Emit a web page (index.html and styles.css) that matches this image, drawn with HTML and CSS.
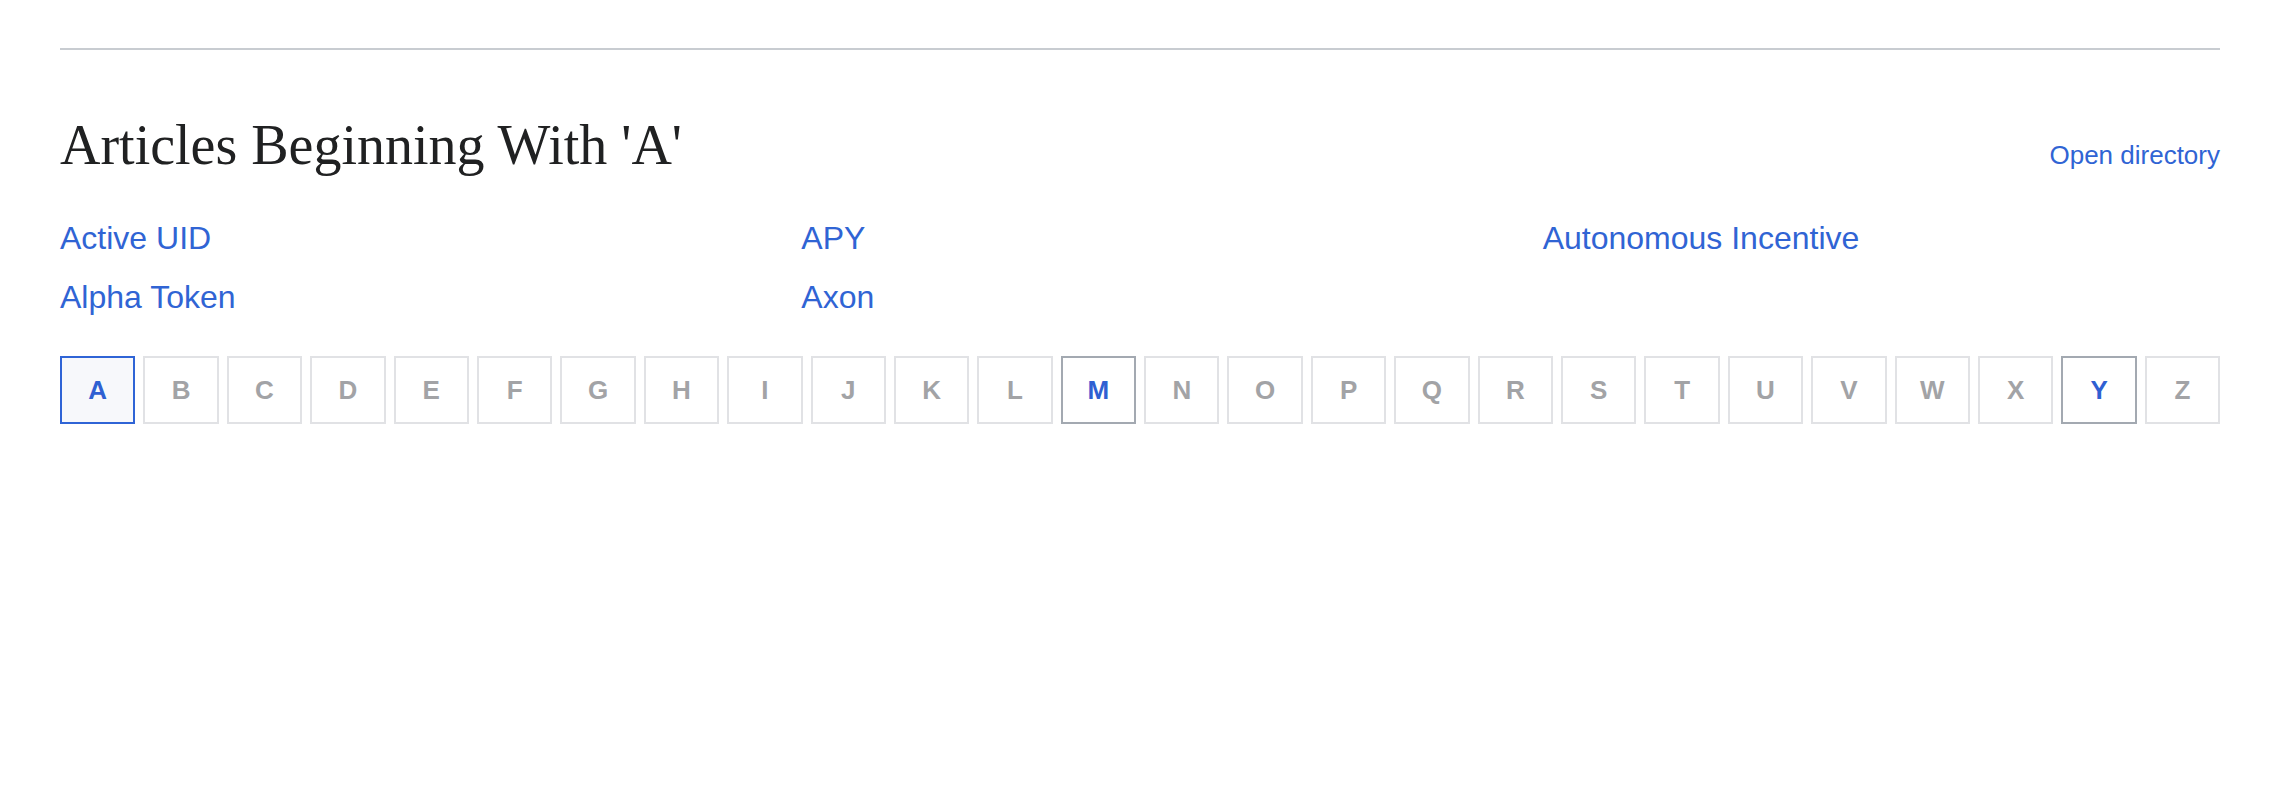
FILE: index.html
```html
<!DOCTYPE html>
<html lang="en">
<head>
<meta charset="utf-8">
<title>Articles Beginning With 'A'</title>
<link rel="stylesheet" href="styles.css">
</head>
<body>
<main class="page">
  <hr class="rule">
  <header class="section-head">
    <h1 class="section-title">Articles Beginning With 'A'</h1>
    <a class="dir-link" href="#">Open directory</a>
  </header>
  <ul class="article-list">
    <li><a href="#">Active UID</a></li>
    <li><a href="#">APY</a></li>
    <li><a href="#">Autonomous Incentive</a></li>
    <li><a href="#">Alpha Token</a></li>
    <li><a href="#">Axon</a></li>
  </ul>
  <nav class="alphabet">
    <a class="letter is-current" href="#">A</a>
    <a class="letter" href="#">B</a>
    <a class="letter" href="#">C</a>
    <a class="letter" href="#">D</a>
    <a class="letter" href="#">E</a>
    <a class="letter" href="#">F</a>
    <a class="letter" href="#">G</a>
    <a class="letter" href="#">H</a>
    <a class="letter" href="#">I</a>
    <a class="letter" href="#">J</a>
    <a class="letter" href="#">K</a>
    <a class="letter" href="#">L</a>
    <a class="letter is-visited" href="#">M</a>
    <a class="letter" href="#">N</a>
    <a class="letter" href="#">O</a>
    <a class="letter" href="#">P</a>
    <a class="letter" href="#">Q</a>
    <a class="letter" href="#">R</a>
    <a class="letter" href="#">S</a>
    <a class="letter" href="#">T</a>
    <a class="letter" href="#">U</a>
    <a class="letter" href="#">V</a>
    <a class="letter" href="#">W</a>
    <a class="letter" href="#">X</a>
    <a class="letter is-visited" href="#">Y</a>
    <a class="letter" href="#">Z</a>
  </nav>
</main>
</body>
</html>
```
FILE: styles.css
```css
html, body {
  margin: 0;
  padding: 0;
  background: #ffffff;
}

body {
  font-family: "Liberation Sans", Arial, sans-serif;
  color: #202122;
}

.page {
  padding: 48px 60px 0;
}

.rule {
  margin: 0;
  border: 0;
  border-top: 2px solid #c8ccd1;
}

.section-head {
  display: flex;
  justify-content: space-between;
  align-items: baseline;
  margin-top: 62px;
}

.section-title {
  margin: 0;
  font-family: "Liberation Serif", "Times New Roman", serif;
  font-weight: normal;
  font-size: 56px;
  line-height: 67px;
  color: #202122;
}

.dir-link {
  font-size: 26px;
  color: #3064d4;
  text-decoration: none;
}

.article-list {
  list-style: none;
  margin: 40px 0 0;
  padding: 0;
  display: grid;
  grid-template-columns: repeat(3, 1fr);
  column-gap: 64px;
  row-gap: 21px;
}

.article-list a {
  font-size: 32px;
  line-height: 38px;
  color: #3064d4;
  text-decoration: none;
}

.alphabet {
  display: flex;
  gap: 8px;
  margin-top: 40px;
}

.letter {
  flex: 1 1 0;
  height: 68px;
  box-sizing: border-box;
  display: flex;
  align-items: center;
  justify-content: center;
  border: 2px solid #e1e2e5;
  background: #ffffff;
  font-size: 26px;
  font-weight: bold;
  color: #a2a3a6;
  text-decoration: none;
}

.letter.is-current {
  border-color: #2f64d6;
  background: #f7f8fb;
  color: #2f60d2;
}

.letter.is-visited {
  border-color: #a3a9b1;
  color: #2f60d2;
}
```
